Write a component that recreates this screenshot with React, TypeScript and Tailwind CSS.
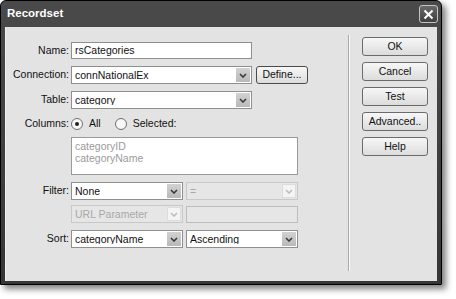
import React from "react";

function Chevron({ disabled }: { disabled?: boolean }) {
  return (
    <svg width="8" height="5" viewBox="0 0 8 5">
      <path d="M1 1l3 3 3-3" fill="none" stroke={disabled ? "#bdbdbd" : "#3a3a3a"} strokeWidth="1.6" />
    </svg>
  );
}

function Select({ value, w, disabled }: { value: string; w: string; disabled?: boolean }) {
  return (
    <div
      className={`flex h-[18px] ${w} items-center border ${
        disabled ? "border-[#c8c8c8] bg-[#e6e6e6] text-[#a8a8a8]" : "border-[#8f8f8f] bg-white text-[#111]"
      }`}
    >
      <span className="flex-1 truncate pl-[3px] leading-none">{value}</span>
      <span
        className={`m-px flex h-[14px] w-[14px] items-center justify-center ${
          disabled ? "border border-[#dcdcdc] bg-[#f4f4f4]" : "bg-gradient-to-b from-[#d2d2d2] to-[#b9b9b9]"
        }`}
      >
        <Chevron disabled={disabled} />
      </span>
    </div>
  );
}

function Row({ label, className, children }: { label?: string; className: string; children: React.ReactNode }) {
  return (
    <div className={`flex items-center ${className}`}>
      <span className="w-[63px] text-right text-[#111]">{label}</span>
      <div className="ml-[2px] flex items-center">{children}</div>
    </div>
  );
}

function Radio({ checked }: { checked?: boolean }) {
  return (
    <span className="flex h-[12px] w-[12px] items-center justify-center rounded-full border border-[#6f6f6f] bg-[#f7f7f7]">
      {checked && <span className="h-[4px] w-[4px] rounded-full bg-[#222]" />}
    </span>
  );
}

function Btn({ label, className = "" }: { label: string; className?: string }) {
  return (
    <div
      className={`flex h-[19px] items-center justify-center rounded-[3px] border border-[#6b6b6b] bg-gradient-to-b from-[#f7f7f7] to-[#dcdcdc] text-[#111] ${className}`}
    >
      {label}
    </div>
  );
}

export default function App() {
  return (
    <div className="h-[299px] w-[456px] bg-white font-['Liberation_Sans',Arial,sans-serif] text-[10.5px]">
      <div className="flex h-[285px] w-[442px] flex-col rounded-t-[6px] border border-black bg-gradient-to-b from-[#4a4a4a] to-[#363636] shadow-[4px_4px_6px_rgba(0,0,0,0.5)]">
        {/* Title bar */}
        <div className="flex h-[26px] items-center justify-between pl-[6px] pr-[3px]">
          <span className="text-[11.5px] font-bold text-white">Recordset</span>
          <div className="flex h-[18px] w-[19px] items-center justify-center rounded-[3px] border border-[#c4c4c4] bg-gradient-to-b from-[#6a6a6a] to-[#404040]">
            <svg width="11" height="11" viewBox="0 0 11 11">
              <path d="M1.5 1.5l8 8M9.5 1.5l-8 8" stroke="#fff" strokeWidth="2" />
            </svg>
          </div>
        </div>

        {/* Client area */}
        <div className="mx-[4px] mb-[3px] flex flex-1 border-l border-[#f0f0f0] bg-[#e3e3e3]">
          <div className="flex w-[342px] flex-col">
            <Row label="Name:" className="mt-[15px] h-[17px]">
              <div className="flex h-[17px] w-[181px] items-center border border-[#8f8f8f] bg-white pl-[3px] text-[#111]">
                rsCategories
              </div>
            </Row>
            <Row label="Connection:" className="mt-[7px] h-[18px]">
              <Select value="connNationalEx" w="w-[181px]" />
              <div className="ml-[4px] flex h-[18px] w-[52px] items-center justify-center rounded-[3px] border border-[#4a4a4a] bg-gradient-to-b from-[#f7f7f7] to-[#dcdcdc] text-[#111]">
                Define...
              </div>
            </Row>
            <Row label="Table:" className="mt-[7px] h-[18px]">
              <Select value="category" w="w-[181px]" />
            </Row>
            <Row label="Columns:" className="mt-[8px] h-[14px]">
              <Radio checked />
              <span className="ml-[6px] text-[#111]">All</span>
              <span className="ml-[14px]">
                <Radio />
              </span>
              <span className="ml-[6px] text-[#111]">Selected:</span>
            </Row>
            <div className="ml-[65px] mt-[6px] flex h-[38px] w-[227px] flex-col border border-[#9a9a9a] bg-white pl-[3px] pt-[2px] leading-[12px] text-[#9a9a9a]">
              <span>categoryID</span>
              <span>categoryName</span>
            </div>
            <Row label="Filter:" className="mt-[7px] h-[18px]">
              <Select value="None" w="w-[112px]" />
              <span className="ml-[3px]">
                <Select value="=" w="w-[112px]" disabled />
              </span>
            </Row>
            <Row className="mt-[5px] h-[18px]">
              <Select value="URL Parameter" w="w-[112px]" disabled />
              <div className="ml-[3px] h-[17px] w-[112px] border border-[#bdbdbd] bg-[#e6e6e6]" />
            </Row>
            <Row label="Sort:" className="mt-[7px] h-[18px]">
              <Select value="categoryName" w="w-[112px]" />
              <span className="ml-[3px]">
                <Select value="Ascending" w="w-[112px]" />
              </span>
            </Row>
          </div>

          {/* Separator */}
          <div className="mt-[8px] h-[236px] w-[2px] border-l border-r border-l-[#a8a8a8] border-r-[#fafafa]" />

          {/* Buttons */}
          <div className="ml-[12px] mt-[10px] flex w-[66px] flex-col gap-[6px]">
            <Btn label="OK" />
            <Btn label="Cancel" />
            <Btn label="Test" />
            <Btn label="Advanced.." />
            <Btn label="Help" />
          </div>
        </div>
      </div>
    </div>
  );
}
